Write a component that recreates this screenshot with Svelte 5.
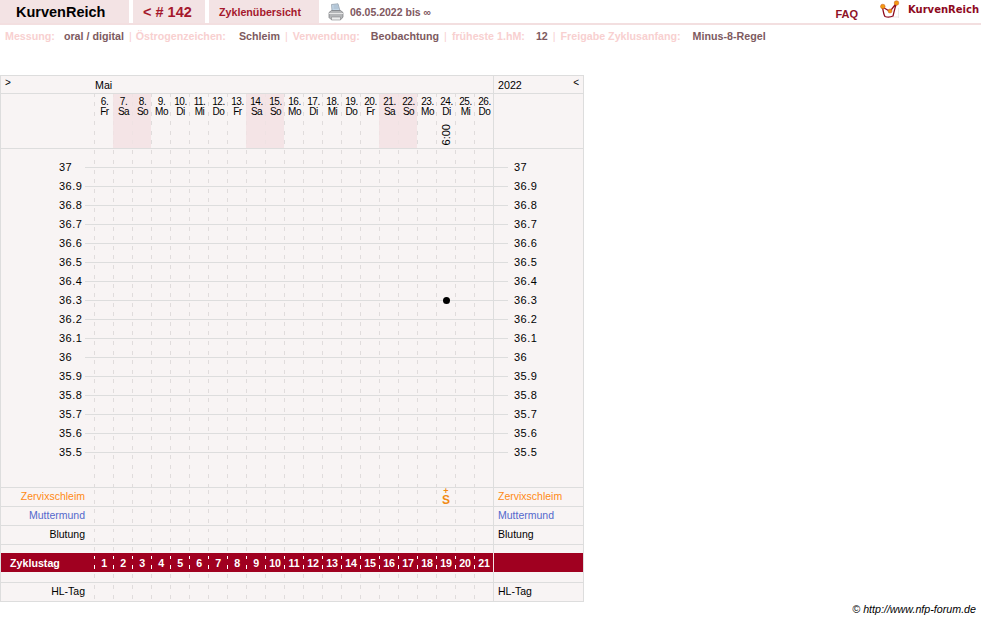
<script>
  // cycle data: one column per day, starting on Fri 6 May 2022
  const names = ['Fr', 'Sa', 'So', 'Mo', 'Di', 'Mi', 'Do'];
  const days = Array.from({ length: 21 }, (_, i) => ({
    date: i + 6,
    name: names[i % 7],
    weekend: i % 7 === 1 || i % 7 === 2,
    cycle: i + 1
  }));
  const temps = ['37', '36.9', '36.8', '36.7', '36.6', '36.5', '36.4', '36.3', '36.2', '36.1', '36', '35.9', '35.8', '35.7', '35.6', '35.5'];
  const measured = { temp: '36.3', day: 18 };
</script>

<div class="page">
  <header class="top">
    <div class="tab brand">KurvenReich</div>
    <div class="tab cycle">&lt; # 142</div>
    <div class="tab overview">Zyklenübersicht</div>
    <svg class="printer" width="16" height="18" viewBox="0 0 16 18">
      <path d="M3.500 1.500 10 .8l2 7H4z" fill="#c3d6e6" stroke="#8a97a3" stroke-width=".7" />
      <path d="M5.500 3h4.500M5.500 5h5" stroke="#8fa3b5" stroke-width=".6" />
      <path d="M1 9.500 3.500 7.500h9L15 9.500v4.500L13 16.500H3L1 14.500z" fill="#b4b6b8" stroke="#77797c" stroke-width=".7" />
      <path d="M1 10.500h14" stroke="#e6e6e6" stroke-width="1" />
      <path d="M3.500 14h9v3h-9z" fill="#eceded" stroke="#86888a" stroke-width=".6" />
    </svg>
    <div class="range">06.05.2022 bis ∞</div>
    <div class="faq">FAQ</div>
    <svg class="logo" width="20" height="20" viewBox="0 0 20 20">
      <path d="M10 17h8.500M18.500 8v10" stroke="#e4dcdc" stroke-width=".7" fill="none" />
      <path d="M2.500 7C3 10 3.500 14 5 16.500c3 1 6 .5 8-.5 1-4 2-8.500 3.500-13M2.500 7 10 11.500 16.500 3" stroke="#8e0a1e" stroke-width="1.300" fill="none" />
      <circle cx="2.800" cy="6.500" r="2.300" fill="#f39a12" stroke="#c8541a" stroke-width=".5" />
      <circle cx="10" cy="11" r="2" fill="#f39a12" stroke="#c8541a" stroke-width=".5" />
      <circle cx="16.500" cy="3" r="2.300" fill="#f39a12" stroke="#c8541a" stroke-width=".5" />
    </svg>
    <div class="logotext">KurvenReich</div>
  </header>

  <div class="meta">
    <span class="k first">Messung:</span><span class="v">oral / digital</span><span class="sep tight">|</span>
    <span class="k wide">Östrogenzeichen:</span><span class="v">Schleim</span><span class="sep">|</span>
    <span class="k">Verwendung:</span><span class="v">Beobachtung</span><span class="sep">|</span>
    <span class="k">früheste 1.hM:</span><span class="v">12</span><span class="sep">|</span>
    <span class="k last">Freigabe Zyklusanfang:</span><span class="v">Minus-8-Regel</span>
  </div>

  <div class="sheet">
    <div class="row month">
      <div class="left arrow">&gt;</div>
      <div class="monthname">Mai</div>
      <div class="right year"><span>2022</span><span class="arrow">&lt;</span></div>
    </div>

    <div class="row dates">
      <div class="left"></div>
      {#each days as d, i}
        <div class="cell date" class:weekend={d.weekend}>
          <span>{d.date}.</span>
          <span>{d.name}</span>
          {#if i === measured.day}<span class="time">6:00</span>{/if}
        </div>
      {/each}
      <div class="right"></div>
    </div>

    <div class="row pad-top">
      <div class="left"></div>
      {#each days as d}<div class="cell"></div>{/each}
      <div class="right"></div>
    </div>
    {#each temps as t}
      <div class="row temp">
        <div class="left tl">{t}</div>
        {#each days as d, i}
          <div class="cell">
            {#if t === measured.temp && i === measured.day}<span class="dot"></span>{/if}
          </div>
        {/each}
        <div class="right tr">{t}</div>
      </div>
    {/each}
    <div class="row pad-bottom">
      <div class="left"></div>
      {#each days as d}<div class="cell"></div>{/each}
      <div class="right"></div>
    </div>

    <div class="row obs orange">
      <div class="left lbl">Zervixschleim</div>
      {#each days as d, i}
        <div class="cell">
          {#if i === measured.day}<span class="mucus"><i>+</i><b>S</b></span>{/if}
        </div>
      {/each}
      <div class="right rlbl">Zervixschleim</div>
    </div>
    <div class="row obs blue">
      <div class="left lbl">Muttermund</div>
      {#each days as d}<div class="cell"></div>{/each}
      <div class="right rlbl">Muttermund</div>
    </div>
    <div class="row obs">
      <div class="left lbl">Blutung</div>
      {#each days as d}<div class="cell"></div>{/each}
      <div class="right rlbl">Blutung</div>
    </div>

    <div class="row gap-a">
      <div class="left"></div>
      {#each days as d}<div class="cell"></div>{/each}
      <div class="right"></div>
    </div>
    <div class="row cycleday">
      <div class="left">Zyklustag</div>
      {#each days as d}<div class="cell">{d.cycle}</div>{/each}
      <div class="right"></div>
    </div>
    <div class="row gap-b">
      <div class="left"></div>
      {#each days as d}<div class="cell"></div>{/each}
      <div class="right"></div>
    </div>

    <div class="row obs">
      <div class="left lbl">HL-Tag</div>
      {#each days as d}<div class="cell"></div>{/each}
      <div class="right rlbl">HL-Tag</div>
    </div>
  </div>

  <footer class="foot">© http://www.nfp-forum.de</footer>
</div>

<style>
  :global(body) { margin: 0; background: #fff; }
  .page { width: 981px; height: 621px; overflow: hidden; font-family: "Liberation Sans", Arial, sans-serif; font-size: 10.700px; color: #000; }

  .top { display: flex; align-items: flex-start; height: 23px; border-bottom: 2px solid #f3dfe0; box-sizing: content-box; }
  .tab { height: 23px; line-height: 24px; background: #f3e3e4; font-weight: 700; box-sizing: border-box; }
  .brand { width: 129px; padding-left: 16px; font-size: 14.500px; margin-right: 4px; }
  .cycle { width: 72px; padding-left: 10px; font-size: 14.500px; color: #a5182c; margin-right: 4px; }
  .overview { width: 110px; padding-left: 10px; color: #a5182c; }
  .printer { margin: 3px 0 0 9px; }
  .range { margin-left: 6px; line-height: 24px; font-size: 10.500px; font-weight: 700; color: #80585f; }
  .faq { margin-left: auto; padding-top: 8px; font-size: 11px; font-weight: 700; color: #8e1226; }
  .logo { margin: 0 0 0 22px; }
  .logotext { margin: 4px 0 0 8px; width: 73px; font-family: "DejaVu Sans", sans-serif; font-size: 10px; font-weight: 700; color: #8e0a1e; white-space: nowrap; }

  .meta { display: flex; height: 24px; padding: 4px 0 0 5px; box-sizing: border-box; font-weight: 700; line-height: 14px; white-space: nowrap; }
  .k { color: #f8d0d0; margin-right: 11px; }
  .first { margin-right: 9px; }
  .wide { margin-right: 13px; }
  .last { margin-right: 12px; }
  .v { color: #7d5a60; }
  .sep { color: #f8d0d0; margin: 0 5px; font-weight: 400; }
  .tight { margin-right: 4px; }

  .sheet { width: 584px; margin-top: 26px; border: 1px solid #ddd; border-width: 1px 1px 0; box-sizing: border-box; background: #f8f4f4; }
  .row { display: flex; height: 19px; box-sizing: border-box; }
  .left { width: 93px; flex: none; box-sizing: border-box; }
  .right { width: 90px; flex: none; box-sizing: border-box; border-left: 1px solid #ddd; }
  .cell {
    --c: #e0dcdc;
    width: 19px; flex: none; box-sizing: border-box; position: relative;
    background: repeating-linear-gradient(to bottom, transparent 0 2.500px, var(--c) 2.500px 6.500px, transparent 6.500px 9.500px) 0 0 / 1px 100% no-repeat;
  }

  .month { height: 18px; border-bottom: 1px solid #ddd; line-height: 19px; }
  .arrow { padding-left: 4px; font-size: 10px; line-height: 14px; }
  .monthname { width: 399px; flex: none; padding-left: 1px; box-sizing: border-box; }
  .year { display: flex; justify-content: space-between; padding-left: 4px; }
  .year .arrow { padding: 0 4px 0 0; }

  .dates { height: 55px; border-bottom: 1px solid #ddd; }
  .date {
    display: flex; flex-direction: column; align-items: center; padding-left: 2px; padding-top: 3px;
    font-size: 10px; line-height: 9.500px; letter-spacing: -.5px;
    background-image: repeating-linear-gradient(to bottom, var(--c) 0 2.500px, transparent 2.500px 8px, var(--c) 8px 9.500px);
  }
  .date span { display: block; }
  .weekend { --c: #efe2e3; background-color: #f4e4e6; }
  .time { position: absolute; left: 5px; top: 30px; writing-mode: vertical-rl; transform: rotate(180deg); font-size: 11px; line-height: 11px; letter-spacing: 0; }

  .pad-top { height: 9px; }
  .pad-top .cell { background-image: repeating-linear-gradient(to bottom, transparent 0 1px, var(--c) 1px 5px, transparent 5px 9.500px); }
  .pad-bottom { height: 26px; border-bottom: 1px solid #ddd; }
  .temp { background: linear-gradient(#ddd, #ddd) 84px 9px / 423px 1px no-repeat; line-height: 19px; font-size: 11px; letter-spacing: .5px; }
  .tl { padding-left: 58px; }
  .tr { padding-left: 20px; }
  .dot { position: absolute; left: 6.500px; top: 5.500px; width: 7.500px; height: 7.500px; border-radius: 50%; background: #000; }

  .obs { border-bottom: 1px solid #ddd; line-height: 16px; font-size: 10.500px; }
  .lbl { text-align: right; padding-right: 9px; }
  .rlbl { padding-left: 4px; }
  .orange .lbl, .orange .rlbl { color: #ff8a14; }
  .blue .lbl, .blue .rlbl { color: #5468cc; }
  .mucus { position: absolute; left: 5px; top: 0; width: 10px; color: #f08a14; text-align: center; }
  .mucus i { display: block; font-style: normal; font-weight: 700; font-size: 9px; line-height: 7px; height: 7px; }
  .mucus b { display: block; font-size: 12px; line-height: 10px; }

  .gap-a { height: 8px; }
  .cycleday { background: #a00020; color: #fff; font-weight: 700; line-height: 20px; }
  .cycleday .left { padding-left: 9px; }
  .cycleday .cell { --c: #fff; text-align: center; padding-left: 1px; white-space: nowrap; letter-spacing: -.2px; }
  .cycleday .right { border-left-color: #f3e3e4; }
  .gap-b { height: 11px; border-bottom: 1px solid #ddd; }

  .foot { padding-right: 5px; text-align: right; font-size: 10.700px; font-style: italic; line-height: 15px; }
</style>
